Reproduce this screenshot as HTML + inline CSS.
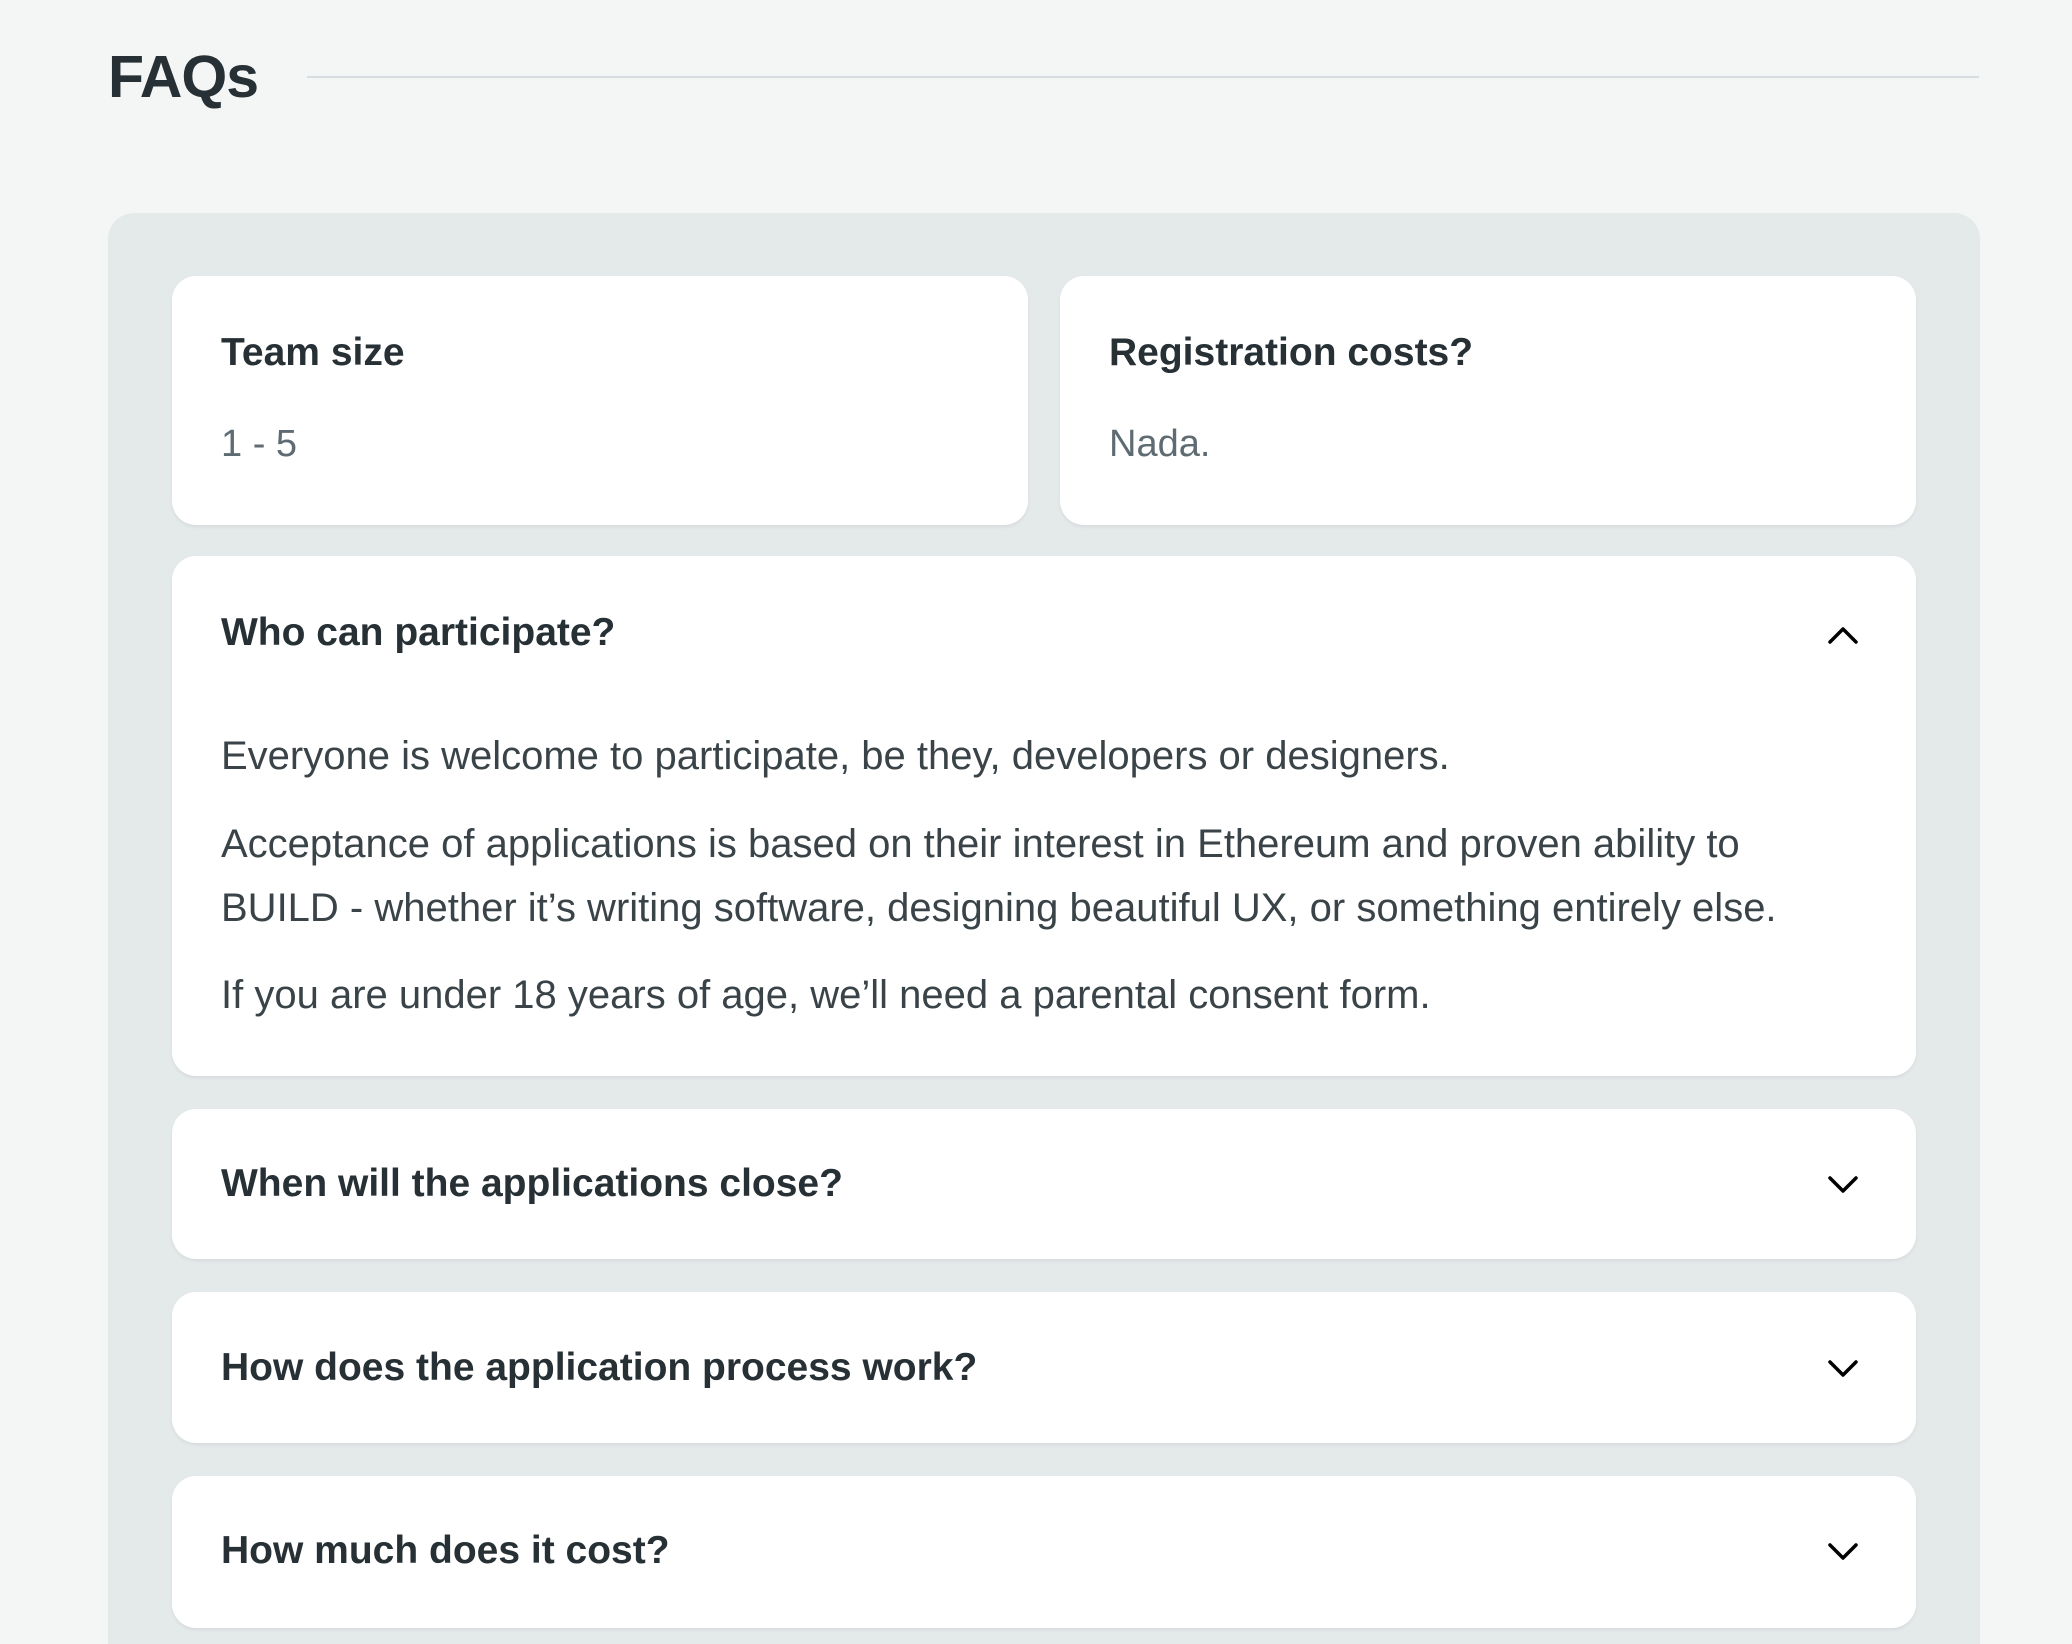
<!DOCTYPE html>
<html style="height:1644px;overflow:hidden"><head><meta charset="utf-8"><style>
*{margin:0;padding:0;box-sizing:border-box}
body{width:2072px;height:1644px;background:#f4f6f5;font-family:"Liberation Sans",sans-serif;color:#263035;position:relative;overflow:hidden}
.t{position:absolute;left:108px;top:42px;font-size:59px;font-weight:bold;letter-spacing:-1px;line-height:70px}
.line{position:absolute;left:307px;right:93px;top:76px;height:2px;background:#d6dcdf}
.wrap{position:absolute;left:108px;top:213px;width:1872px;height:1431px;background:#e4e9ea;border-radius:26px 26px 0 0}
.c{position:absolute;background:#fff;border-radius:24px;box-shadow:0 2px 3px rgba(0,0,0,.06)}
.h{position:absolute;left:49px;font-size:39px;font-weight:bold;line-height:40px;transform:translateY(-50%)}
.p{position:absolute;left:49px;font-size:40px;line-height:44px;transform:translateY(-50%);color:#3a4448;white-space:nowrap}
.g{color:#5f6b72;font-size:38px}
svg{position:absolute;right:58px;width:30px;height:18px}
</style></head><body>
<div class="t">FAQs</div><div class="line"></div>
<div class="wrap"></div>
<div class="c" style="left:172px;top:276px;width:856px;height:249px">
<div class="h" style="top:77px">Team size</div><div class="p g" style="top:168px">1 - 5</div></div>
<div class="c" style="left:1060px;top:276px;width:856px;height:249px">
<div class="h" style="top:77px">Registration costs?</div><div class="p g" style="top:168px">Nada.</div></div>
<div class="c" style="left:172px;top:556px;width:1744px;height:520px">
<div class="h" style="top:77px">Who can participate?</div>
<svg viewBox="0 0 30 18" style="top:70px"><path d="M2 16L15 3L28 16" fill="none" stroke="#000" stroke-width="3.5" stroke-linecap="round" stroke-linejoin="round"/></svg>
<div class="p" style="top:200px">Everyone is welcome to participate, be they, developers or designers.</div>
<div class="p" style="top:288px">Acceptance of applications is based on their interest in Ethereum and proven ability to</div>
<div class="p" style="top:352px">BUILD - whether it’s writing software, designing beautiful UX, or something entirely else.</div>
<div class="p" style="top:439px">If you are under 18 years of age, we’ll need a parental consent form.</div>
</div>
<div class="c" style="left:172px;top:1109px;width:1744px;height:150px">
<div class="h" style="top:75px">When will the applications close?</div>
<svg viewBox="0 0 30 18" style="top:67px"><path d="M2 2L15 15L28 2" fill="none" stroke="#000" stroke-width="3.5" stroke-linecap="round" stroke-linejoin="round"/></svg></div>
<div class="c" style="left:172px;top:1292px;width:1744px;height:151px">
<div class="h" style="top:76px">How does the application process work?</div>
<svg viewBox="0 0 30 18" style="top:68px"><path d="M2 2L15 15L28 2" fill="none" stroke="#000" stroke-width="3.5" stroke-linecap="round" stroke-linejoin="round"/></svg></div>
<div class="c" style="left:172px;top:1476px;width:1744px;height:152px">
<div class="h" style="top:75px">How much does it cost?</div>
<svg viewBox="0 0 30 18" style="top:67px"><path d="M2 2L15 15L28 2" fill="none" stroke="#000" stroke-width="3.5" stroke-linecap="round" stroke-linejoin="round"/></svg></div>
</body></html>
